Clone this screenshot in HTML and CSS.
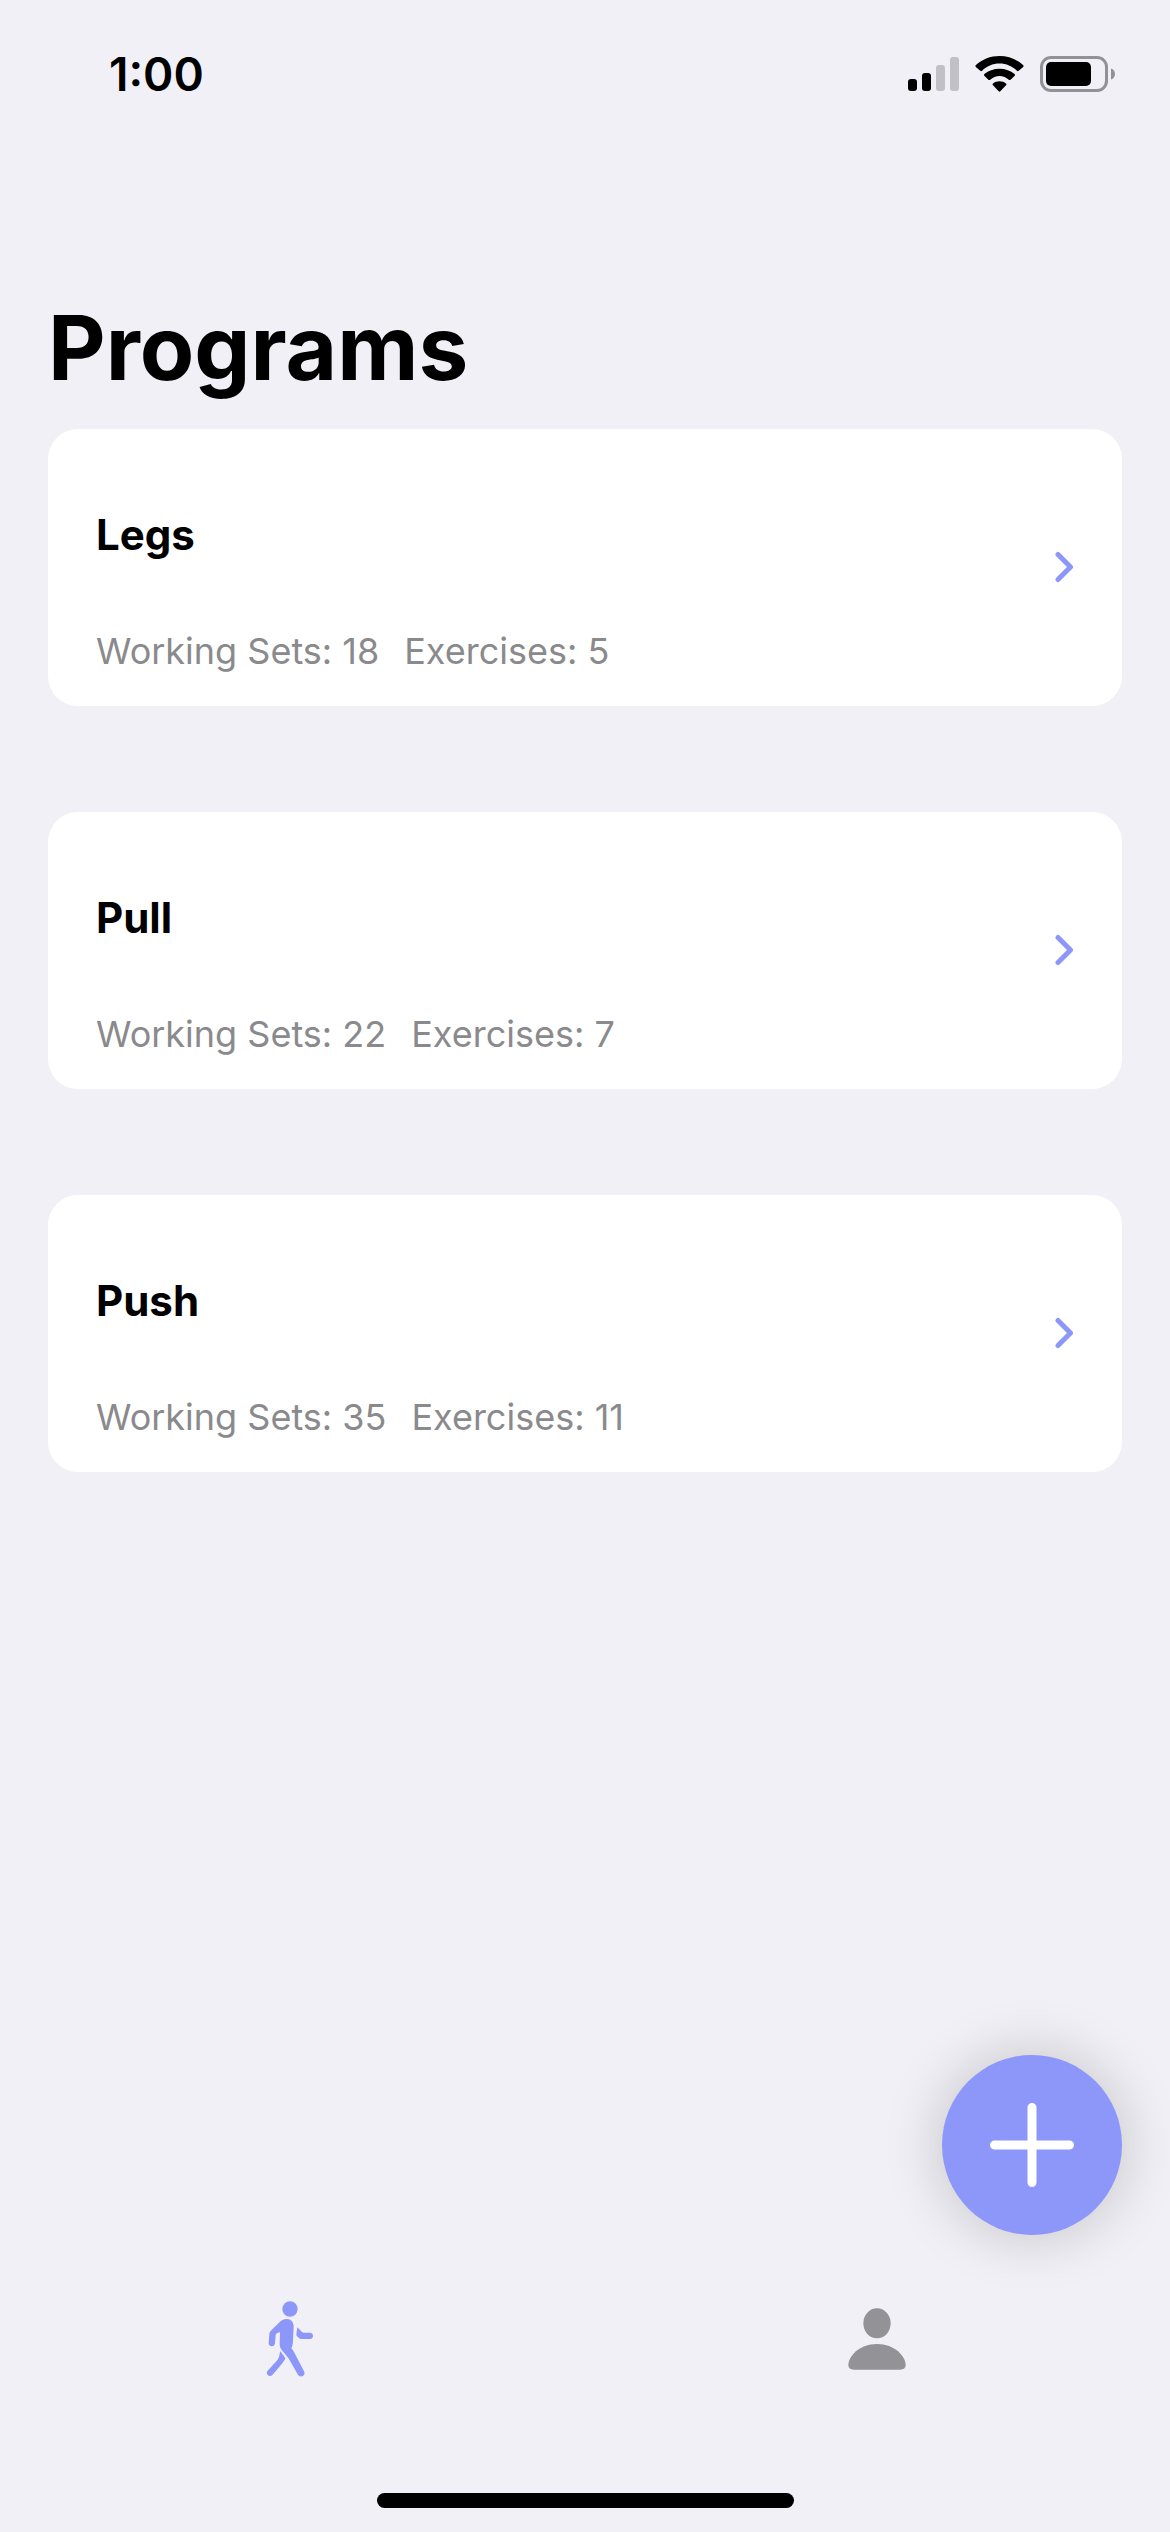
FILE: index.html
```html
<!DOCTYPE html>
<html lang="en">
<head>
<meta charset="utf-8">
<meta name="viewport" content="width=device-width, initial-scale=1">
<title>Programs</title>
<link rel="stylesheet" href="styles.css">
</head>
<body>
<div class="app">
  <header class="status-bar">
    <time class="clock">1:00</time>
    <div class="indicators">
      <svg width="51" height="34" viewBox="0 0 51 34" aria-hidden="true">
        <rect x="0" y="22" width="9" height="12" rx="3"/>
        <rect x="14" y="16" width="9" height="18" rx="3"/>
        <rect x="28" y="8" width="9" height="26" rx="3" fill="#c1c0c6"/>
        <rect x="42" y="0" width="9" height="34" rx="3" fill="#c1c0c6"/>
      </svg>
      <svg width="49" height="36" viewBox="0 0 49 36" aria-hidden="true">
        <path d="M24.500 7.600C31.300 7.600 37.300 10.200 41.900 14.800Q42.800 15.700 43.700 14.800L48.200 10.900Q49 10 48.100 9.100C41.700 3.200 33.500 0 24.500 0S7.300 3.200.9 9.100Q0 10 .8 10.900L5.300 14.800Q6.200 15.700 7.100 14.800C11.700 10.200 17.700 7.600 24.500 7.600Z"/>
        <path d="M24.500 20C28 20 31.200 21.400 33.800 23.700Q34.700 24.500 35.600 23.700L39.700 19.800Q40.500 19 39.600 18.100C35.500 14.600 30.500 12.700 24.500 12.700S13.500 14.600 9.400 18.100Q8.500 19 9.300 19.800L13.400 23.700Q14.300 24.500 15.200 23.700C17.800 21.400 21 20 24.500 20Z"/>
        <path d="M31 29.200Q31.900 28.400 31 27.500C29.300 26.200 27.100 25.300 24.500 25.300S19.700 26.200 18 27.500Q17.100 28.400 18 29.200L23.700 35.300Q24.500 36.200 25.300 35.300Z"/>
      </svg>
      <svg class="battery" width="75" height="36" viewBox="0 0 75 36" aria-hidden="true">
        <rect x="1.500" y="1.500" width="65" height="33" rx="9.500" fill="none" stroke="#929196" stroke-width="3"/>
        <rect x="6" y="6" width="45" height="24" rx="5"/>
        <path d="M71 12.500C73.500 13.300 75 15.500 75 18S73.500 22.700 71 23.500Z" fill="#929196"/>
      </svg>
    </div>
  </header>

  <main class="content">
    <h1 class="title">Programs</h1>
    <div class="programs">
      <a class="card" href="#legs">
        <div>
          <h2 class="name">Legs</h2>
          <p class="meta"><span>Working Sets: 18</span><span>Exercises: 5</span></p>
        </div>
        <svg class="chevron" width="20" height="32" viewBox="0 0 20 32" aria-hidden="true"><path d="M4 3.500 16.500 16 4 28.500"/></svg>
      </a>
      <a class="card" href="#pull">
        <div>
          <h2 class="name">Pull</h2>
          <p class="meta"><span>Working Sets: 22</span><span>Exercises: 7</span></p>
        </div>
        <svg class="chevron" width="20" height="32" viewBox="0 0 20 32" aria-hidden="true"><path d="M4 3.500 16.500 16 4 28.500"/></svg>
      </a>
      <a class="card" href="#push">
        <div>
          <h2 class="name">Push</h2>
          <p class="meta"><span>Working Sets: 35</span><span>Exercises: 11</span></p>
        </div>
        <svg class="chevron" width="20" height="32" viewBox="0 0 20 32" aria-hidden="true"><path d="M4 3.500 16.500 16 4 28.500"/></svg>
      </a>
    </div>
    <button class="add" type="button" aria-label="Add program">
      <svg width="84" height="84" viewBox="0 0 84 84" aria-hidden="true"><path d="M42 4.500V79.500M4.500 42H79.500"/></svg>
    </button>
  </main>

  <footer class="tab-bar">
    <nav class="tabs">
      <a class="tab tab-active" href="#programs" aria-label="Programs" aria-current="page">
        <svg width="57" height="76" viewBox="72 62 171 228" aria-hidden="true">
          <circle cx="150" cy="86" r="23"/>
          <path d="M120 157C120 154 109 158 107 163L105 189C104 201 86 201 86 188L88 163C88 158 90 154 94 150L117 127C124 120 131 116 140 116C153 116 161 125 161 139L159 181C159 190 157 197 154 204C158 208 161 213 164 219L192 273C199 286 180 295 173 282L147 236C143 229 138 224 132 217C123 207 119 201 119 190Z"/>
          <path d="M121 212C126 220 132 226 136 234C134 240 130 245 126 250L97 284C88 293 75 281 83 271L113 238C116 234 117 230 118 225Z"/>
          <path d="M172 141L186 155Q188 157 191 157H210C222 157 222 176 210 176H184Q180 176 177 173L171 168Q169 166 169 162Z"/>
        </svg>
      </a>
      <a class="tab" href="#profile" aria-label="Profile">
        <svg width="60" height="64" viewBox="80 82 180 192" aria-hidden="true">
          <ellipse cx="167" cy="131" rx="41" ry="45"/>
          <path d="M97 270C87 270 81 265 81 256C81 231 113 193 167 193S253 231 253 256C253 265 247 270 237 270Z"/>
        </svg>
      </a>
    </nav>
    <div class="home-indicator"></div>
  </footer>
</div>
</body>
</html>
```
FILE: styles.css
```css
:root {
  --accent: #8c97f9;
  --background: #f1f0f6;
  --muted: #8a8a8d;
}

* {
  box-sizing: border-box;
}

body {
  margin: 0;
  background: var(--background);
  color: #000;
  font-family: Inter, "Liberation Sans", sans-serif;
}

h1,
h2,
p {
  margin: 0;
}

a {
  color: inherit;
  text-decoration: none;
}

svg {
  display: block;
  flex: none;
}

.app {
  display: flex;
  flex-direction: column;
  min-height: 100vh;
}

.status-bar {
  display: flex;
  justify-content: space-between;
  align-items: center;
  padding: 46px 55px 0 109px;
}

.clock {
  font-size: 46px;
  font-weight: 600;
  line-height: 56px;
}

.indicators {
  display: flex;
  align-items: center;
  gap: 16px;
}

.content {
  position: relative;
  flex: 1;
  padding: 191px 48px 48px;
}

.title {
  font-size: 89px;
  font-weight: 700;
  line-height: 110px;
}

.programs {
  display: grid;
  gap: 106px;
  margin-top: 26px;
}

.card {
  display: flex;
  justify-content: space-between;
  align-items: center;
  padding: 81px 48px 33px;
  border-radius: 30px;
  background: #fff;
}

.name {
  font-size: 42px;
  font-weight: 700;
  line-height: 50px;
}

.meta {
  display: flex;
  gap: 25px;
  margin-top: 69px;
  color: var(--muted);
  font-size: 36px;
  line-height: 44px;
}

.chevron {
  margin-top: -50px;
  fill: none;
  stroke: var(--accent);
  stroke-width: 5;
  stroke-linecap: round;
  stroke-linejoin: round;
}

.add {
  position: absolute;
  right: 48px;
  bottom: 48px;
  display: grid;
  place-items: center;
  width: 180px;
  height: 180px;
  padding: 0;
  border: 0;
  border-radius: 50%;
  background: var(--accent);
  box-shadow: 0 0 60px rgb(0 0 0 / 20%);
}

.add svg {
  fill: none;
  stroke: #fff;
  stroke-width: 9;
  stroke-linecap: round;
}

.tab-bar {
  padding: 18px 0 24px;
}

.tabs {
  display: grid;
  grid-template-columns: 1fr 1fr;
}

.tab {
  display: grid;
  place-items: center;
  fill: #929297;
}

.tab-active {
  fill: var(--accent);
}

.home-indicator {
  width: 417px;
  height: 15px;
  margin: 116px auto 0;
  border-radius: 8px;
  background: #000;
}
```
